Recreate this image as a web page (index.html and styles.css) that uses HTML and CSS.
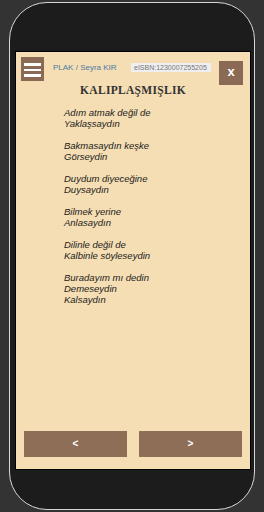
FILE: index.html
```html
<!DOCTYPE html>
<html lang="tr">
	<head>
		<title>KALIPLAŞMIŞLIK</title>
		<meta charset="utf-8">
		<meta name="viewport" content="width=device-width, initial-scale=1">
		<link rel="stylesheet" href="styles.css">
	</head>

	<body>
		<div class="phone">
			<div class="screen">
				<div class="topbar">
					<div class="menuBtn"><span></span><span></span><span></span></div>
					<div class="meta">
						<span class="author">PLAK / Seyra KIR</span>
						<span class="isbn">eISBN:1230007255205</span>
					</div>
					<div class="closeBtn">x</div>
				</div>

				<h1 class="title">KALIPLAŞMIŞLIK</h1>

				<div class="poem">
					<p>Adım atmak değil de<br/>Yaklaşsaydın</p>
					<p>Bakmasaydın keşke<br/>Görseydin</p>
					<p>Duydum diyeceğine<br/>Duysaydın</p>
					<p>Bilmek yerine<br/>Anlasaydın</p>
					<p>Dilinle değil de<br/>Kalbinle söyleseydin</p>
					<p>Buradayım mı dedin<br/>Demeseydin<br/>Kalsaydın</p>
				</div>

				<div class="pager">
					<div class="pageBtn">&lt;</div>
					<div class="pageBtn">&gt;</div>
				</div>
			</div>
		</div>
	</body>
</html>
```

FILE: styles.css
```css
			* {
				box-sizing: border-box;
			}

			body {
				background-color: #333333;
				margin: 0px;
				overflow: hidden;
				font-family: "Liberation Sans", Arial, sans-serif;
			}

			.phone {
				width: 246px;
				height: 508px;
				margin: 2px 0 0 9px;
				padding: 48px 0 0 5px;
				background-color: #1c1c1c;
				border: 1px solid #d8d8d8;
				border-radius: 38px;
			}

			.screen {
				width: 236px;
				height: 419px;
				display: flex;
				flex-direction: column;
				background-color: #f5deb3;
				border: 1px solid #000;
			}

			.topbar {
				display: flex;
				align-items: flex-start;
				padding: 5px 7px 0 5px;
			}

			.menuBtn {
				width: 23px;
				height: 24px;
				padding: 6px 3px 0 3px;
				background-color: #8b6a55;
				display: flex;
				flex-direction: column;
				gap: 3px;
			}

			.menuBtn span {
				display: block;
				height: 2.5px;
				background-color: #fff;
			}

			.meta {
				flex: 1;
				display: flex;
				align-items: center;
				justify-content: space-between;
				margin: 6px 8px 0 9px;
			}

			.author {
				font-size: 8px;
				color: #4c7ba6;
			}

			.isbn {
				font-size: 7px;
				color: #777;
				background-color: #efefef;
				padding: 1px 3px;
				width: 80px;
			}

			.closeBtn {
				width: 24px;
				height: 24px;
				margin-top: 4px;
				background-color: #8b6a55;
				color: #fff;
				font-size: 13px;
				font-weight: bold;
				line-height: 22px;
				text-align: center;
			}

			.title {
				margin: -1px 0 0 0;
				text-align: center;
				font-family: "Liberation Serif", "Times New Roman", serif;
				font-size: 11.5px;
				line-height: 13px;
				letter-spacing: 0.3px;
				color: #333;
			}

			.poem {
				padding: 10px 0 0 48px;
				font-style: italic;
				font-size: 9.5px;
				line-height: 11px;
				color: #222;
			}

			.poem p {
				margin: 0 0 11px 0;
			}

			.pager {
				margin-top: auto;
				display: flex;
				gap: 12px;
				padding: 0 8px 12px 8px;
			}

			.pageBtn {
				flex: 1;
				height: 26px;
				background-color: #8f6e58;
				color: #fff;
				font-size: 10px;
				font-weight: bold;
				line-height: 26px;
				text-align: center;
			}
```
